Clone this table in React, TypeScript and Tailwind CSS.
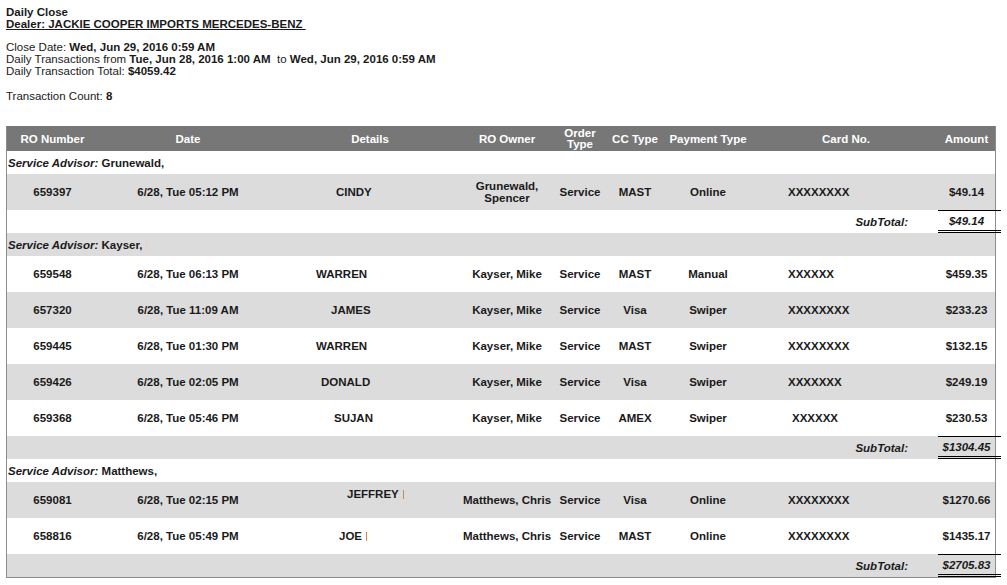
import React from 'react';

type Row = {
  ro: string;
  date: string;
  details: string;
  detailsCls: string;
  bar?: boolean;
  owner: string;
  order: string;
  cc: string;
  pay: string;
  card: string;
  cardCls: string;
  amount: string;
};

type Group = {
  advisor: string;
  mark?: boolean;
  rows: Row[];
  subtotal: string;
};

const groups: Group[] = [
  {
    advisor: 'Grunewald,',
    rows: [
      { ro: '659397', date: '6/28, Tue 05:12 PM', details: 'CINDY', detailsCls: 'pl-[58px]', owner: 'Grunewald, Spencer', order: 'Service', cc: 'MAST', pay: 'Online', card: 'XXXXXXXX', cardCls: 'pl-[34px]', amount: '$49.14' },
    ],
    subtotal: '$49.14',
  },
  {
    advisor: 'Kayser,',
    mark: true,
    rows: [
      { ro: '659548', date: '6/28, Tue 06:13 PM', details: 'WARREN', detailsCls: 'pl-[38px]', owner: 'Kayser, Mike', order: 'Service', cc: 'MAST', pay: 'Manual', card: 'XXXXXX', cardCls: 'pl-[34px]', amount: '$459.35' },
      { ro: '657320', date: '6/28, Tue 11:09 AM', details: 'JAMES', detailsCls: 'pl-[53px]', owner: 'Kayser, Mike', order: 'Service', cc: 'Visa', pay: 'Swiper', card: 'XXXXXXXX', cardCls: 'pl-[34px]', amount: '$233.23' },
      { ro: '659445', date: '6/28, Tue 01:30 PM', details: 'WARREN', detailsCls: 'pl-[38px]', owner: 'Kayser, Mike', order: 'Service', cc: 'MAST', pay: 'Swiper', card: 'XXXXXXXX', cardCls: 'pl-[34px]', amount: '$132.15' },
      { ro: '659426', date: '6/28, Tue 02:05 PM', details: 'DONALD', detailsCls: 'pl-[43px]', owner: 'Kayser, Mike', order: 'Service', cc: 'Visa', pay: 'Swiper', card: 'XXXXXXX', cardCls: 'pl-[34px]', amount: '$249.19' },
      { ro: '659368', date: '6/28, Tue 05:46 PM', details: 'SUJAN', detailsCls: 'pl-[56px]', owner: 'Kayser, Mike', order: 'Service', cc: 'AMEX', pay: 'Swiper', card: 'XXXXXX', cardCls: 'pl-[38px]', amount: '$230.53' },
    ],
    subtotal: '$1304.45',
  },
  {
    advisor: 'Matthews,',
    rows: [
      { ro: '659081', date: '6/28, Tue 02:15 PM', details: 'JEFFREY', detailsCls: 'pl-[69px] pb-[12px]', bar: true, owner: 'Matthews, Chris', order: 'Service', cc: 'Visa', pay: 'Online', card: 'XXXXXXXX', cardCls: 'pl-[34px]', amount: '$1270.66' },
      { ro: '658816', date: '6/28, Tue 05:49 PM', details: 'JOE', detailsCls: 'pl-[61px]', bar: true, owner: 'Matthews, Chris', order: 'Service', cc: 'MAST', pay: 'Online', card: 'XXXXXXXX', cardCls: 'pl-[34px]', amount: '$1435.17' },
    ],
    subtotal: '$2705.83',
  },
];

const stripe = (i: number) => (i % 2 === 0 ? 'bg-white' : 'bg-[#dcdcdc]');

export default function App() {
  let idx = 0;
  const body: React.ReactNode[] = [];

  groups.forEach((g, gi) => {
    body.push(
      <tr key={`a${gi}`} className={`h-[23px] ${stripe(idx++)}`}>
        <td colSpan={9} className="pl-[1px] text-left">
          <i>Service Advisor:</i> {g.advisor}
          {g.mark && <span className="ml-[4px] inline-block h-[9px] w-[1px] bg-[#e6d2b0] align-middle" />}
        </td>
      </tr>
    );
    g.rows.forEach((r) => {
      body.push(
        <tr key={r.ro} className={`h-[36px] ${stripe(idx++)}`}>
          <td className="text-center">{r.ro}</td>
          <td className="text-center">{r.date}</td>
          <td className={`text-left ${r.detailsCls}`}>
            {r.details}
            {r.bar && <span className="ml-[4px] inline-block h-[9px] w-[1px] bg-[#d08a4a] align-middle" />}
          </td>
          <td className="text-center leading-[12px]">{r.owner}</td>
          <td className="text-center">{r.order}</td>
          <td className="text-center">{r.cc}</td>
          <td className="text-center">{r.pay}</td>
          <td className={`whitespace-nowrap text-left ${r.cardCls}`}>{r.card}</td>
          <td className="text-center">{r.amount}</td>
        </tr>
      );
    });
    body.push(
      <tr key={`s${gi}`} className={`h-[23px] ${stripe(idx++)}`}>
        <td colSpan={8} className="pr-[30px] text-right italic">SubTotal:</td>
        <td className="p-0 italic">
          <div className="relative -mr-[6px] flex h-[23px] items-center border-t border-b-[3px] border-double border-t-black border-b-black pr-[6px]">
            <span className="w-full text-center">{g.subtotal}</span>
          </div>
        </td>
      </tr>
    );
  });

  return (
    <div className="min-h-[585px] w-[1007px] bg-white pt-[6px] font-['Liberation_Sans',Arial,sans-serif] text-[11.5px] leading-[12px] text-[#1a1a1a]">
      <div className="px-[6px]">
        <div className="font-bold">Daily Close</div>
        <div className="font-bold underline decoration-1 underline-offset-[1px]">Dealer: JACKIE COOPER IMPORTS MERCEDES-BENZ&nbsp;</div>
        <div className="mt-[11px]">
          Close Date: <b>Wed, Jun 29, 2016 0:59 AM</b>
        </div>
        <div>
          Daily Transactions from <b>Tue, Jun 28, 2016 1:00 AM</b>&nbsp; to <b>Wed, Jun 29, 2016 0:59 AM</b>
        </div>
        <div>
          Daily Transaction Total: <b>$4059.42</b>
        </div>
        <div className="mt-[13px]">
          Transaction Count: <b>8</b>
        </div>
      </div>

      <div className="ml-[6px] mt-[24px] w-[990px] border-x border-b border-[#8c8c8c]">
        <table className="w-full table-fixed border-collapse font-bold">
          <colgroup>
            <col className="w-[91px]" />
            <col className="w-[180px]" />
            <col className="w-[184px]" />
            <col className="w-[90px]" />
            <col className="w-[56px]" />
            <col className="w-[54px]" />
            <col className="w-[92px]" />
            <col className="w-[184px]" />
            <col className="w-[57px]" />
          </colgroup>
          <thead>
            <tr className="h-[25px] bg-[#777777] text-white">
              <th className="text-center">RO Number</th>
              <th className="text-center">Date</th>
              <th className="text-center">Details</th>
              <th className="text-center">RO Owner</th>
              <th className="text-center leading-[11px]">
                Order
                <br />
                Type
              </th>
              <th className="text-center">CC Type</th>
              <th className="whitespace-nowrap text-center">Payment Type</th>
              <th className="text-center">Card No.</th>
              <th className="text-center">Amount</th>
            </tr>
          </thead>
          <tbody>{body}</tbody>
        </table>
      </div>
    </div>
  );
}
